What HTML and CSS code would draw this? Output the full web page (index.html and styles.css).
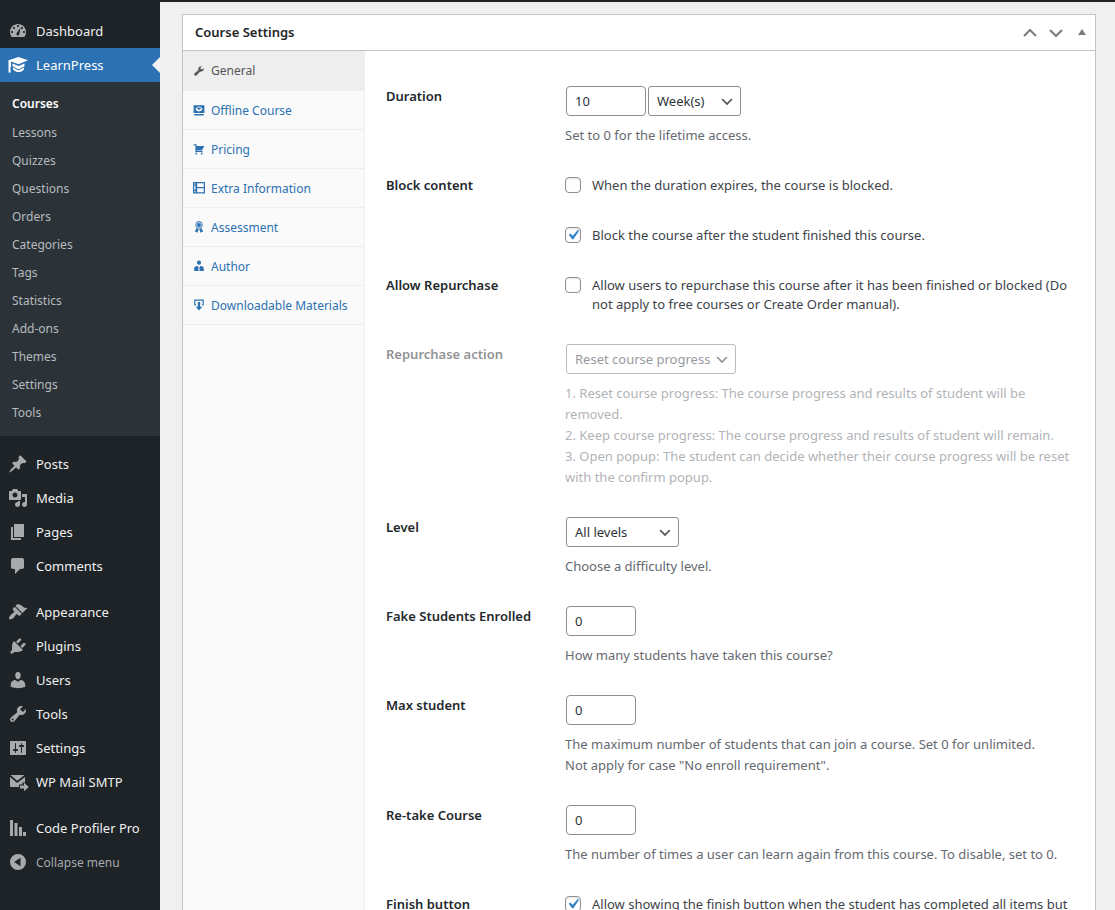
FILE: index.html
```html
<!DOCTYPE html>
<html lang="en">
<head>
<meta charset="utf-8">
<title>Course Settings</title>
<link rel="stylesheet" href="styles.css">
</head>
<body>
<div class="shell">
  <nav class="sidebar" aria-label="Main menu">
    <ul class="menu">
      <li><a class="menu-link" href="#"><svg class="icon" viewBox="0 0 20 20"><path fill-rule="evenodd" d="M3.76 16h12.48c1.1-1.37 1.76-3.11 1.76-5 0-4.42-3.58-8-8-8s-8 3.58-8 8c0 1.89.66 3.63 1.76 5zM10 4c.55 0 1 .45 1 1s-.45 1-1 1-1-.45-1-1 .45-1 1-1zM6 6c.55 0 1 .45 1 1s-.45 1-1 1-1-.45-1-1 .45-1 1-1zm8 0c.55 0 1 .45 1 1s-.45 1-1 1-1-.45-1-1 .45-1 1-1zM12.500 6.500L11.300 13c-.2 1.100-1 1.700-1.800 1.500s-1.300-1-1-2c.1-.4.300-.7.600-.95zM4 10c.55 0 1 .45 1 1s-.45 1-1 1-1-.45-1-1 .45-1 1-1zm12 0c.55 0 1 .45 1 1s-.45 1-1 1-1-.45-1-1 .45-1 1-1z"/></svg>Dashboard</a></li>
      <li>
        <a class="menu-link menu-link--open" href="#"><svg class="icon" viewBox="0 0 20 20"><path d="M10.500 2L20 5.300l-9.500 3.900L3 6.600v5.200l-.6.400.4 5.300H.5V5.200z"/><path d="M4.500 8.600l6 2.400 6-2.400v2.600l-6 3.200-6-3.200z"/><path d="M5 12.600l5.500 3L16 12.600v1.800c-1.500 1.600-3.500 2.600-5.500 2.600S6.500 16 5 14.400z"/></svg>LearnPress</a>
        <ul class="submenu">
          <li class="submenu-current"><a href="#">Courses</a></li>
          <li><a href="#">Lessons</a></li>
          <li><a href="#">Quizzes</a></li>
          <li><a href="#">Questions</a></li>
          <li><a href="#">Orders</a></li>
          <li><a href="#">Categories</a></li>
          <li><a href="#">Tags</a></li>
          <li><a href="#">Statistics</a></li>
          <li><a href="#">Add-ons</a></li>
          <li><a href="#">Themes</a></li>
          <li><a href="#">Settings</a></li>
          <li><a href="#">Tools</a></li>
        </ul>
      </li>
    </ul>
    <ul class="menu">
      <li><a class="menu-link" href="#"><svg class="icon" viewBox="0 0 20 20"><path d="M10.440 3.020l1.820-1.820 6.360 6.350-1.830 1.820c-1.050-.68-2.480-.57-3.410.36l-.75.75c-.92.93-1.040 2.350-.35 3.410l-1.830 1.820-2.410-2.410-2.800 2.790c-.42.42-3.380 2.710-3.800 2.290s1.860-3.390 2.280-3.810l2.790-2.790L4.100 9.360l1.830-1.820c1.050.69 2.480.57 3.400-.36l.75-.75c.93-.92 1.050-2.350.36-3.410z"/></svg>Posts</a></li>
      <li><a class="menu-link" href="#"><svg class="icon" viewBox="0 0 20 20"><path fill-rule="evenodd" d="M13 11V4c0-.55-.45-1-1-1h-1.670L9 1H5L3.670 3H2c-.55 0-1 .45-1 1v7c0 .55.45 1 1 1h10c.55 0 1-.45 1-1zM7 4.500c1.380 0 2.500 1.120 2.500 2.500S8.380 9.500 7 9.500 4.500 8.380 4.500 7 5.620 4.500 7 4.500zM14 6h5v10.500c0 1.380-1.120 2.500-2.500 2.500S14 17.880 14 16.500s1.120-2.500 2.500-2.500c.17 0 .34.02.5.05V9h-3V6zm-4 8.050V13h2v3.500c0 1.380-1.120 2.500-2.500 2.500S7 17.880 7 16.500 8.120 14 9.500 14c.17 0 .34.02.5.05z"/></svg>Media</a></li>
      <li><a class="menu-link" href="#"><svg class="icon" viewBox="0 0 20 20"><path d="M6 15V2h10v13H6zm-1 1h8v2H3V5h2v11z"/></svg>Pages</a></li>
      <li><a class="menu-link" href="#"><svg class="icon" viewBox="0 0 20 20"><path d="M5 2h9c1.100 0 2 .9 2 2v7c0 1.100-.9 2-2 2h-2l-5 5v-5H5c-1.100 0-2-.9-2-2V4c0-1.100.9-2 2-2z"/></svg>Comments</a></li>
    </ul>
    <ul class="menu">
      <li><a class="menu-link" href="#"><svg class="icon" viewBox="0 0 20 20"><path d="M14.480 11.060L7.410 3.990l1.500-1.500c.5-.56 2.300-.47 3.510.32 1.210.8 1.430 1.280 2.910 2.100 1.180.64 2.450 1.260 4.450.85zm-.71.71L6.700 4.700 4.930 6.470c-.39.39-.39 1.020 0 1.410l1.060 1.060c.39.39.39 1.030 0 1.420-.6.6-1.430 1.110-2.210 1.690-.35.26-.7.53-1.010.84C1.430 14.230.4 16.080 1.400 17.070c.99 1 2.840-.03 4.180-1.360.31-.31.58-.66.85-1.020.57-.78 1.080-1.610 1.690-2.210.39-.39 1.020-.39 1.410 0l1.060 1.060c.39.39 1.020.39 1.410 0z"/></svg>Appearance</a></li>
      <li><a class="menu-link" href="#"><svg class="icon" viewBox="0 0 20 20"><path d="M13.110 4.360L9.870 7.600 8 5.730l3.240-3.240c.35-.34 1.050-.2 1.560.32.52.51.66 1.210.31 1.550zm-8 1.770l.91-1.120 9.010 9.010-1.190.84c-.71.71-2.630 1.160-3.820 1.160H6.140L4.900 17.260c-.59.59-1.540.59-2.120 0-.59-.58-.59-1.530 0-2.120l1.240-1.240v-3.880c0-1.130.4-3.190 1.090-3.890zm7.260 3.970l3.240-3.240c.34-.35 1.040-.21 1.550.31.52.51.66 1.210.31 1.550l-3.240 3.250z"/></svg>Plugins</a></li>
      <li><a class="menu-link" href="#"><svg class="icon" viewBox="0 0 20 20"><path d="M10 9.250c-2.270 0-2.730-3.440-2.730-3.440C7 4.020 7.820 2 9.970 2c2.160 0 2.980 2.020 2.710 3.810 0 0-.41 3.440-2.680 3.440zm0 2.570L12.720 10c2.390 0 4.520 2.330 4.520 4.530v2.490s-3.650 1.130-7.240 1.130c-3.650 0-7.240-1.130-7.240-1.130v-2.490c0-2.250 1.940-4.480 4.470-4.480z"/></svg>Users</a></li>
      <li><a class="menu-link" href="#"><svg class="icon" viewBox="0 0 20 20"><path fill-rule="evenodd" d="M16.680 9.770c-1.340 1.340-3.300 1.670-4.950.99l-5.410 6.520c-.99.99-2.590.99-3.580 0s-.99-2.590 0-3.570l6.520-5.420c-.68-1.650-.35-3.610.99-4.950 1.280-1.280 3.120-1.620 4.720-1.060l-2.890 2.890 2.820 2.820 2.860-2.870c.53 1.580.18 3.390-1.080 4.650zM3.810 16.210c.4.39 1.040.39 1.430 0 .4-.4.4-1.040 0-1.430-.39-.4-1.030-.4-1.430 0-.39.39-.39 1.030 0 1.430z"/></svg>Tools</a></li>
      <li><a class="menu-link" href="#"><svg class="icon" viewBox="0 0 20 20"><path fill-rule="evenodd" d="M18 16V4c0-.55-.45-1-1-1H3c-.55 0-1 .45-1 1v12c0 .55.45 1 1 1h14c.55 0 1-.45 1-1zM8 11h1c.55 0 1 .45 1 1s-.45 1-1 1H8v1.500c0 .28-.22.5-.5.5s-.5-.22-.5-.5V13H6c-.55 0-1-.45-1-1s.45-1 1-1h1V5.500c0-.28.22-.5.5-.5s.5.22.5.5V11zm5-2h-1c-.55 0-1-.45-1-1s.45-1 1-1h1V5.500c0-.28.22-.5.5-.5s.5.22.5.5V7h1c.55 0 1 .45 1 1s-.45 1-1 1h-1v5.500c0 .28-.22.5-.5.5s-.5-.22-.5-.5V9z"/></svg>Settings</a></li>
      <li><a class="menu-link" href="#"><svg class="icon icon--wide" viewBox="0 0 20 20"><path d="M2 5l7.200 6L17 5v5.500h-2.500v2H11V15H3.300A1.300 1.300 0 0 1 2 13.700z"/><path d="M2.500 3h14l-7.300 5.800z"/><path d="M12 13.500h4V10.800l4.800 4.200-4.800 4.200v-2.700h-4z"/></svg>WP Mail SMTP</a></li>
    </ul>
    <ul class="menu">
      <li><a class="menu-link" href="#"><svg class="icon" viewBox="0 0 20 20"><path d="M2 2h3v16H2zM6.500 5h3v13h-3zM11 9h3v9h-3zM15 14h3v4h-3z"/></svg>Code Profiler Pro</a></li>
      <li><button class="menu-link menu-link--collapse" type="button"><svg class="icon" viewBox="0 0 20 20"><path fill-rule="evenodd" d="M10 2a8 8 0 1 1 0 16 8 8 0 0 1 0-16zm2.500 3.800L6.200 10l6.300 4.200z"/></svg>Collapse menu</button></li>
    </ul>
  </nav>

  <main class="content">
    <section class="box">
      <header class="box-head">
        <h2 class="box-title">Course Settings</h2>
        <div class="box-actions">
          <button type="button" aria-label="Move up"><svg viewBox="0 0 20 20"><path class="chevron" d="M4 13l6-6 6 6"/></svg></button>
          <button type="button" aria-label="Move down"><svg viewBox="0 0 20 20"><path class="chevron" d="M4 7l6 6 6-6"/></svg></button>
          <button type="button" aria-label="Toggle panel"><svg viewBox="0 0 20 20"><path d="M10 6l4 6H6z"/></svg></button>
        </div>
      </header>
      <div class="box-body">
        <ul class="tabs">
          <li><a class="tab tab--active" href="#"><svg class="tab-icon" viewBox="0 0 20 20"><path fill-rule="evenodd" d="M16.680 9.770c-1.340 1.340-3.300 1.670-4.950.99l-5.410 6.520c-.99.99-2.590.99-3.580 0s-.99-2.590 0-3.570l6.520-5.420c-.68-1.650-.35-3.610.99-4.950 1.280-1.280 3.120-1.620 4.720-1.060l-2.890 2.890 2.820 2.820 2.860-2.870c.53 1.580.18 3.390-1.080 4.650z"/></svg>General</a></li>
          <li><a class="tab" href="#"><svg class="tab-icon" viewBox="0 0 20 20"><path fill-rule="evenodd" d="M1 2h18v13H1zM4 8.500C6 5.500 8 4.500 10 4.500s4 1 6 4c-2 3-4 4-6 4s-4-1-6-4zm2 0h2.500a1.500 1.500 0 1 0 3 0H14C13 7 11.500 6 10 6S7 7 6 8.500zM2 16.500h16V19H2z"/></svg>Offline Course</a></li>
          <li><a class="tab" href="#"><svg class="tab-icon" viewBox="0 0 20 20"><path d="M6 13h9c.55 0 1 .45 1 1s-.45 1-1 1H5c-.55 0-1-.45-1-1V4H2c-.55 0-1-.45-1-1s.45-1 1-1h3c.55 0 1 .45 1 1v2h13l-4 7H6zm-.5 3a1.500 1.500 0 1 1 0 3 1.500 1.500 0 0 1 0-3zm9 0a1.500 1.500 0 1 1 0 3 1.500 1.500 0 0 1 0-3z"/></svg>Pricing</a></li>
          <li><a class="tab" href="#"><svg class="tab-icon" viewBox="0 0 20 20"><path fill-rule="evenodd" d="M0 0h20v19H0zM2 2v2h2V2zm0 4v7h2V6zm0 9v2h2v-2zM7 2v6.500h11V2zm0 8.500V17h11v-6.500z"/></svg>Extra Information</a></li>
          <li><a class="tab" href="#"><svg class="tab-icon" viewBox="0 0 20 20"><path fill-rule="evenodd" d="M10 0l2 1 2 .3.700 2L16 5l-.4 2 .4 2-1.700 1.400L13.500 12 11.500 12 10 13l-1.500-1-2 0-.8-1.600L4 9l.4-2L4 5l1.300-1.700.7-2L8 1zm0 2.200a4.300 4.300 0 1 0 0 8.600 4.300 4.300 0 0 0 0-8.600z"/><circle cx="10" cy="6.500" r="3.300"/><path d="M5.500 12l4 1.500L7.500 20l-1.800-2-2.700.3zM14.500 12l-4 1.500 2 6.500 1.800-2 2.700.3z"/></svg>Assessment</a></li>
          <li><a class="tab" href="#"><svg class="tab-icon" viewBox="0 0 20 20"><circle cx="10" cy="4.500" r="3.500"/><path d="M7 9.500l2.500 3-1 5h3l-1-5 2.500-3c3 .5 5 2.500 5 4.500v4.500H2V14c0-2 2-4 5-4.500z"/></svg>Author</a></li>
          <li><a class="tab" href="#"><svg class="tab-icon" viewBox="0 0 20 20"><path d="M2 1h16v10h-3V9h1V3H4v6h1v2H2z"/><path d="M8 5h4v8h3.500L10 19l-5.500-6H8z"/></svg>Downloadable Materials</a></li>
        </ul>
        <form class="fields">
          <div class="row">
            <label class="row-label" for="duration">Duration</label>
            <div class="row-control">
              <div class="inline">
                <input class="text text--wide" id="duration" type="text" inputmode="numeric" value="10">
                <select class="select select--unit" aria-label="Duration unit"><option>Week(s)</option></select>
              </div>
              <p class="help">Set to 0 for the lifetime access.</p>
            </div>
          </div>
          <div class="row">
            <span class="row-label">Block content</span>
            <div class="row-control row-control--checks">
              <label class="check"><input type="checkbox"><span>When the duration expires, the course is blocked.</span></label>
              <label class="check"><input type="checkbox" checked><span>Block the course after the student finished this course.</span></label>
            </div>
          </div>
          <div class="row">
            <span class="row-label">Allow Repurchase</span>
            <div class="row-control">
              <label class="check"><input type="checkbox"><span>Allow users to repurchase this course after it has been finished or blocked (Do not apply to free courses or Create Order manual).</span></label>
            </div>
          </div>
          <div class="row row--disabled">
            <label class="row-label" for="action">Repurchase action</label>
            <div class="row-control">
              <select class="select select--action" id="action" disabled><option>Reset course progress</option></select>
              <p class="help">1. Reset course progress: The course progress and results of student will be removed.<br>2. Keep course progress: The course progress and results of student will remain.<br>3. Open popup: The student can decide whether their course progress will be reset with the confirm popup.</p>
            </div>
          </div>
          <div class="row">
            <label class="row-label" for="level">Level</label>
            <div class="row-control">
              <select class="select select--level" id="level"><option>All levels</option></select>
              <p class="help">Choose a difficulty level.</p>
            </div>
          </div>
          <div class="row">
            <label class="row-label" for="fake">Fake Students Enrolled</label>
            <div class="row-control">
              <input class="text" id="fake" type="text" inputmode="numeric" value="0">
              <p class="help">How many students have taken this course?</p>
            </div>
          </div>
          <div class="row">
            <label class="row-label" for="max">Max student</label>
            <div class="row-control">
              <input class="text" id="max" type="text" inputmode="numeric" value="0">
              <p class="help">The maximum number of students that can join a course. Set 0 for unlimited.<br>Not apply for case "No enroll requirement".</p>
            </div>
          </div>
          <div class="row">
            <label class="row-label" for="retake">Re-take Course</label>
            <div class="row-control">
              <input class="text" id="retake" type="text" inputmode="numeric" value="0">
              <p class="help">The number of times a user can learn again from this course. To disable, set to 0.</p>
            </div>
          </div>
          <div class="row">
            <span class="row-label">Finish button</span>
            <div class="row-control">
              <label class="check"><input type="checkbox" checked><span>Allow showing the finish button when the student has completed all items but</span></label>
            </div>
          </div>
        </form>
      </div>
    </section>
  </main>
</div>
</body>
</html>
```

FILE: styles.css
```css
*, *::before, *::after { box-sizing: border-box; }

body {
  margin: 0;
  background: #f0f0f1;
  color: #3c434a;
  font: 13px/19px "Noto Sans", "Open Sans", sans-serif;
}

ul { list-style: none; margin: 0; padding: 0; }
a { text-decoration: none; }
button { font: inherit; border: 0; background: none; padding: 0; cursor: pointer; }

.shell {
  display: flex;
  height: 100vh;
  overflow: hidden;
  border-top: 2px solid #1d2327;
}

/* Sidebar */
.sidebar {
  flex: 0 0 160px;
  background: #1d2327;
  padding-top: 12px;
}
.menu + .menu { margin-top: 12px; }
.menu:first-child + .menu { margin-top: 11px; }
.menu-link {
  display: flex;
  align-items: center;
  gap: 8px;
  width: 100%;
  height: 34px;
  padding-left: 8px;
  color: #f0f0f1;
  position: relative;
}
.icon { width: 20px; height: 20px; fill: #a7aaad; flex: none; }
.icon--wide { overflow: visible; }
.menu-link--open { background: #2c71b1; color: #fff; }
.menu-link--open .icon { fill: #fff; }
.menu-link--open::after {
  content: "";
  position: absolute;
  right: 0;
  top: 9px;
  border: 8px solid transparent;
  border-left: 0;
  border-right-color: #f0f0f1;
}
.menu-link--collapse { color: #a7aaad; font-size: 12px; }
.submenu { background: #2c3338; padding: 8px 0 9px; }
.submenu a {
  display: block;
  padding: 5px 12px;
  font-size: 12px;
  line-height: 18px;
  color: #b6bbbf;
}
.submenu .submenu-current { margin-bottom: 1px; }
.submenu .submenu-current a { color: #fff; font-weight: 600; }

/* Settings box */
.content { flex: 1; min-width: 0; padding: 12px 19px 0 22px; }
.box { background: #fff; border: 1px solid #c3c4c7; }
.box-head {
  display: flex;
  align-items: center;
  justify-content: space-between;
  height: 36px;
  padding: 0 3px 0 12px;
  border-bottom: 1px solid #c3c4c7;
}
.box-title { margin: 0; font-size: 13px; font-weight: 600; color: #1d2327; }
.box-actions { display: flex; gap: 6px; }
.box-actions button { width: 20px; height: 20px; }
.box-actions svg { display: block; width: 20px; height: 20px; fill: #787c82; }
.box-actions .chevron { fill: none; stroke: #787c82; stroke-width: 2; }
.box-body { display: flex; }

.tabs { flex: 0 0 182px; background: #fafafa; border-right: 1px solid #eee; }
.tab {
  display: flex;
  align-items: center;
  gap: 6px;
  height: 39px;
  padding-left: 10px;
  border-bottom: 1px solid #eee;
  color: #2c71b1;
  font-size: 12px;
}
.tab--active { height: 40px; background: #eee; color: #555; }
.tab-icon { width: 12px; height: 12px; fill: currentColor; flex: none; }

.fields {
  flex: 1;
  min-width: 0;
  display: flex;
  flex-direction: column;
  gap: 29px;
  padding: 35px 14px 29px 21px;
}
.row { display: grid; grid-template-columns: 179px 1fr; }
.row-label { padding-top: 1px; font-weight: 600; color: #23282d; }
.row-control { min-width: 0; }
.row-control--checks { display: grid; gap: 29px; }
.inline { display: flex; gap: 2px; }
.help { margin: 9px 0 0; line-height: 21px; color: #646970; }

.text, .select {
  display: block;
  height: 30px;
  margin: 0 0 0 1px;
  border: 1px solid #8c8f94;
  border-radius: 4px;
  background-color: #fff;
  color: #2c3338;
  font: inherit;
}
.text { width: 70px; padding: 0 8px; }
.text--wide { width: 80px; }
.inline .select { margin-left: 0; }
.select {
  appearance: none;
  padding: 0 24px 0 8px;
  border-radius: 3px;
  background-image: url("data:image/svg+xml,%3Csvg xmlns='http://www.w3.org/2000/svg' viewBox='0 0 20 20'%3E%3Cpath d='M5 6l5 5 5-5 2 1-7 7-7-7 2-1z' fill='%23555'/%3E%3C/svg%3E");
  background-repeat: no-repeat;
  background-position: right 5px top 55%;
  background-size: 16px 16px;
}
.select--unit { width: 93px; }
.select--level { width: 113px; }
.select--action { width: 170px; }

.check { display: flex; gap: 11px; padding: 1px 0; }
.check input {
  appearance: none;
  flex: none;
  width: 16px;
  height: 16px;
  margin: 1px 0 0;
  border: 1px solid #8c8f94;
  border-radius: 4px;
  background: #fff;
  box-shadow: inset 0 1px 2px rgba(0, 0, 0, 0.1);
}
.check input:checked {
  background: #fff url("data:image/svg+xml,%3Csvg xmlns='http://www.w3.org/2000/svg' viewBox='0 0 20 20'%3E%3Cpath d='M14.830 4.890l1.340.94-5.810 8.380H9.020L5.780 9.670l1.340-1.250 2.570 2.400z' fill='%233582c4'/%3E%3C/svg%3E") center / 20px 20px no-repeat;
}

.row--disabled .row-label, .row--disabled .help { opacity: 0.5; }
.select:disabled { opacity: 0.6; color: #50575e; }
```
